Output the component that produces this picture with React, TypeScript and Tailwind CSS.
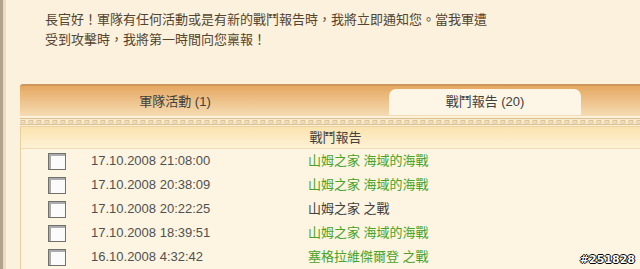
import React from "react";

const rows = [
  { date: "17.10.2008 21:08:00", title: "山姆之家 海域的海戰", win: true },
  { date: "17.10.2008 20:38:09", title: "山姆之家 海域的海戰", win: true },
  { date: "17.10.2008 20:22:25", title: "山姆之家 之戰", win: false },
  { date: "17.10.2008 18:39:51", title: "山姆之家 海域的海戰", win: true },
  { date: "16.10.2008 4:32:42", title: "塞格拉維傑爾登 之戰", win: true },
];

function KeyBand() {
  // 回紋裝飾條
  return (
    <svg width="100%" height="7" className="block">
      <defs>
        <pattern id="meander" width="8" height="7" patternUnits="userSpaceOnUse">
          <path
            d="M0 0.5 H8 M0 6.5 H8 M1 6.5 V2.5 H5 V5 H3 V4"
            stroke="#dcc08e"
            strokeWidth="1"
            fill="none"
          />
        </pattern>
      </defs>
      <rect width="100%" height="7" fill="#f8ead0" />
      <rect width="100%" height="7" fill="url(#meander)" />
    </svg>
  );
}

function Checkbox() {
  return (
    <div className="w-[18px] h-[17px] border border-[#707070] bg-[#fbfbfb] shadow-[inset_2px_2px_0_#ababab]" />
  );
}

export default function App() {
  return (
    <div
      className="relative w-[640px] h-[269px] overflow-hidden flex bg-[#fbf1dd] text-[13px]"
      style={{ fontFamily: '"Liberation Sans", Arial, "Noto Sans CJK TC", sans-serif' }}
    >
      <div className="w-[3px] bg-[#b2a28b]" />
      <div className="w-[3px] bg-[#eadcc4]" />
      <div className="flex-1 pl-[14px] flex flex-col">
        <p className="pl-[25px] pt-[10px] w-[470px] leading-[20px] text-[#54442f]">
          長官好！軍隊有任何活動或是有新的戰鬥報告時，我將立即通知您。當我軍遭受到攻擊時，我將第一時間向您稟報！
        </p>

        {/* 分頁 */}
        <div className="mt-[34px] h-[33px] flex border-t-2 border-[#cf965c] rounded-tl-[3px] bg-gradient-to-b from-[#e5a860] to-[#f5dcb3] text-[#404040]">
          <div className="w-[310px] flex items-center justify-center pt-[1px]">軍隊活動 (1)</div>
          <div className="flex-1 flex items-end justify-center">
            <div className="w-[192px] h-[26px] mb-[1px] rounded-t-[7px] bg-[#fdf6e6] flex items-center justify-center">
              戰鬥報告 (20)
            </div>
          </div>
        </div>

        <div className="mt-[2px]">
          <KeyBand />
        </div>

        {/* 報告列表 */}
        <div className="mt-[1px] flex-1 border-l border-t border-[#e9d09f] bg-[#fdf5e1]">
          <div className="h-[22px] flex items-center justify-center pl-[10px] bg-gradient-to-b from-[#fbe3ae] to-[#fdf1d6] border-b border-[#f0dcb3] text-[#404040]">
            戰鬥報告
          </div>
          {rows.map((r, i) => (
            <div key={i} className="h-[24px] flex items-center">
              <div className="w-[70px] flex justify-center pl-[1px]">
                <Checkbox />
              </div>
              <div className="w-[217px] text-[#505050]">{r.date}</div>
              <div className={r.win ? "text-[#48a326]" : "text-[#404040]"}>{r.title}</div>
            </div>
          ))}
        </div>
      </div>

      <div
        className="absolute right-[5px] bottom-[4px] text-[11px] font-bold text-white leading-none"
        style={{ fontFamily: '"DejaVu Sans", sans-serif', textShadow: "1px 0 #000, -1px 0 #000, 0 1px #000, 0 -1px #000" }}
      >
        #251828
      </div>
    </div>
  );
}
